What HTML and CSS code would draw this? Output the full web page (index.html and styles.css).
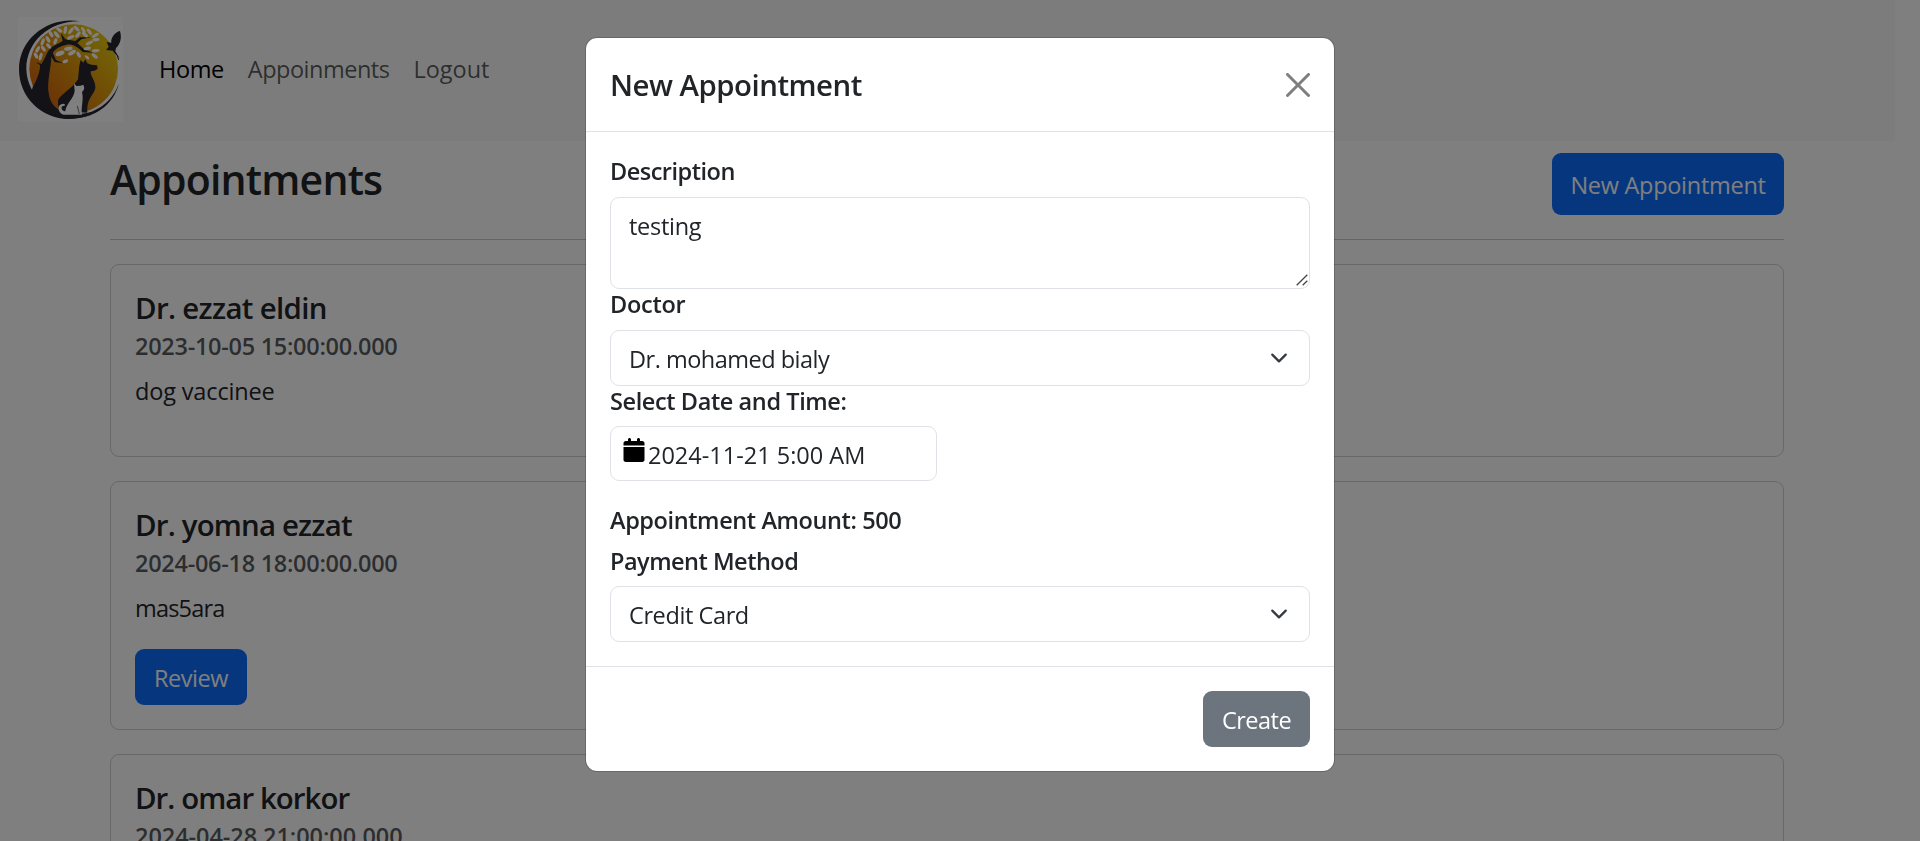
FILE: index.html
```html
<!DOCTYPE html>
<html lang="en">
<head>
<meta charset="utf-8">
<title>Appointments</title>
<link rel="stylesheet" href="styles.css">
</head>
<body>
<nav class="navbar">
  <svg class="logo" viewBox="54 51 315 315" aria-hidden="true">
    <defs>
      <linearGradient id="sun" x1="0.15" y1="0.85" x2="0.85" y2="0.2">
        <stop offset="0" stop-color="#d8660c"/><stop offset="0.5" stop-color="#e0930c"/><stop offset="1" stop-color="#e8c510"/>
      </linearGradient>
    </defs>
    <rect x="54" y="51" width="315" height="315" fill="#fff"/>
    <path fill="#26242f" d="M240 64C150 48 57 112 57 208C57 292 124 357 206 357C280 357 340 318 357 250C338 305 290 338 240 344C150 344 82 290 79 208C78 128 145 62 240 64Z"/>
    <circle cx="221" cy="206" r="133" fill="url(#sun)"/>
    <g fill="#26242f">
      <path d="M98 262C112 240 122 205 120 196L108 186L124 192C136 176 140 156 150 146C162 134 180 130 188 122L182 98L196 118L226 123L240 112L274 112L244 118L232 129L252 148L280 158L248 156C232 140 218 132 200 134C180 138 166 146 158 158L168 180L190 190L164 186L154 170C154 200 140 244 146 280C150 310 166 330 200 338C260 346 290 338 318 312C296 342 250 356 204 356C156 354 110 320 92 284Z"/>
      <path d="M238 196L242 180L250 188L256 178L262 190L274 194L291 196L293 206L284 212L272 214C270 228 286 240 286 262C284 286 260 290 262 338L180 334C174 316 172 308 176 296C192 276 220 262 234 238Z"/>
      <path d="M320 126L334 128C332 112 346 96 360 93C366 112 362 132 348 144L346 154L360 176L338 152L318 150L326 140Z"/>
      <path fill="none" stroke="#26242f" stroke-width="3" d="M342 156Q354 164 356 180"/>
    </g>
    <g fill="#fff">
      <path d="M222 250L229 258L242 257L250 254C254 264 254 268 246 276C252 300 242 324 246 344L190 344C172 338 170 312 190 311C198 312 196 318 188 318C180 324 188 334 196 334C198 310 222 296 224 272Z"/>
      <path stroke="#26242f" stroke-width="2" fill="none" d="M232 318L238 342"/>
      <ellipse cx="113" cy="148" rx="5" ry="11" transform="rotate(30 113 148)"/>
      <ellipse cx="108" cy="167" rx="5" ry="10" transform="rotate(-30 108 167)"/>
      <ellipse cx="122" cy="170" rx="5" ry="12" transform="rotate(15 122 170)"/>
      <ellipse cx="128" cy="126" rx="5" ry="12" transform="rotate(20 128 126)"/>
      <ellipse cx="144" cy="118" rx="5" ry="11" transform="rotate(-30 144 118)"/>
      <ellipse cx="130" cy="146" rx="5" ry="10" transform="rotate(-35 130 146)"/>
      <ellipse cx="146" cy="138" rx="5" ry="10" transform="rotate(-40 146 138)"/>
      <ellipse cx="153" cy="102" rx="5" ry="11" transform="rotate(-30 153 102)"/>
      <ellipse cx="170" cy="104" rx="5" ry="12" transform="rotate(-40 170 104)"/>
      <ellipse cx="166" cy="124" rx="5" ry="10" transform="rotate(20 166 124)"/>
      <ellipse cx="178" cy="90" rx="5" ry="11" transform="rotate(-50 178 90)"/>
      <ellipse cx="196" cy="90" rx="5" ry="12" transform="rotate(10 196 90)"/>
      <ellipse cx="213" cy="92" rx="5" ry="12" transform="rotate(35 213 92)"/>
      <ellipse cx="230" cy="86" rx="5" ry="11" transform="rotate(-45 230 86)"/>
      <ellipse cx="212" cy="112" rx="5" ry="12" transform="rotate(65 212 112)"/>
      <ellipse cx="234" cy="104" rx="5" ry="11" transform="rotate(40 234 104)"/>
      <ellipse cx="250" cy="90" rx="5" ry="10" transform="rotate(-30 250 90)"/>
      <ellipse cx="255" cy="104" rx="5" ry="11" transform="rotate(-50 255 104)"/>
      <ellipse cx="268" cy="95" rx="5" ry="11" transform="rotate(-35 268 95)"/>
      <ellipse cx="286" cy="106" rx="5" ry="12" transform="rotate(60 286 106)"/>
      <ellipse cx="288" cy="119" rx="5" ry="11" transform="rotate(85 288 119)"/>
      <ellipse cx="268" cy="129" rx="5" ry="12" transform="rotate(65 268 129)"/>
      <ellipse cx="262" cy="145" rx="5" ry="11" transform="rotate(80 262 145)"/>
      <ellipse cx="287" cy="152" rx="5" ry="12" transform="rotate(85 287 152)"/>
      <ellipse cx="284" cy="168" rx="5" ry="11" transform="rotate(-50 284 168)"/>
      <ellipse cx="261" cy="172" rx="4" ry="8" transform="rotate(-50 261 172)"/>
      <ellipse cx="205" cy="146" rx="6" ry="13" transform="rotate(80 205 146)"/>
      <ellipse cx="180" cy="160" rx="7" ry="14" transform="rotate(70 180 160)"/>
      <ellipse cx="216" cy="158" rx="6" ry="13" transform="rotate(60 216 158)"/>
      <ellipse cx="236" cy="164" rx="5" ry="10" transform="rotate(-30 236 164)"/>
      <ellipse cx="196" cy="184" rx="5" ry="9" transform="rotate(70 196 184)"/>
    </g>
  </svg>
  <div class="nav-links">
    <a class="nav-link active track-4">Home</a>
    <a class="nav-link track-5">Appoinments</a>
    <a class="nav-link">Logout</a>
  </div>
</nav>
<main class="container">
  <header class="page-head">
    <h3 class="page-title track-8">Appointments</h3>
    <button class="btn btn-primary btn-new track-3">New Appointment</button>
  </header>
  <section class="cards">
    <article class="card">
      <h5 class="card-title track-7">Dr. ezzat eldin</h5>
      <h6 class="card-date track-3">2023-10-05 15:00:00.000</h6>
      <p class="card-text track-2">dog vaccinee</p>
    </article>
    <article class="card">
      <h5 class="card-title track-8">Dr. yomna ezzat</h5>
      <h6 class="card-date track-3">2024-06-18 18:00:00.000</h6>
      <p class="card-text track-8">mas5ara</p>
      <button class="btn btn-primary btn-review track-5">Review</button>
    </article>
    <article class="card">
      <h5 class="card-title track-9">Dr. omar korkor</h5>
      <h6 class="card-date track-1">2024-04-28 21:00:00.000</h6>
    </article>
  </section>
</main>
<div class="backdrop">
  <div class="modal">
    <div class="modal-header">
      <h5 class="modal-title track-5">New Appointment</h5>
      <svg class="close" viewBox="0 0 16 16"><path d="M.293.293a1 1 0 0 1 1.414 0L8 6.586 14.293.293a1 1 0 1 1 1.414 1.414L9.414 8l6.293 6.293a1 1 0 0 1-1.414 1.414L8 9.414l-6.293 6.293a1 1 0 0 1-1.414-1.414L6.586 8 .293 1.707a1 1 0 0 1 0-1.414z"/></svg>
    </div>
    <div class="modal-body">
      <h6 class="label track-5">Description</h6>
      <div class="field area"><span class="track-3">testing</span>
        <svg class="grip" viewBox="0 0 12 12"><path d="M.7 11.3 11.3.7M6.7 11.3l4.6-4.6"/></svg>
      </div>
      <h6 class="label track-3">Doctor</h6>
      <div class="field select"><span class="track-5">Dr. mohamed bialy</span>
        <svg class="chevron" viewBox="0 0 16 16"><path d="m2 5 6 6 6-6"/></svg>
      </div>
      <h6 class="label label-tight track-4">Select Date and Time:</h6>
      <div class="field date">
        <svg class="calendar" viewBox="0 0 448 512"><path d="M96 32V64H48C21.500 64 0 85.500 0 112v48H448V112c0-26.500-21.500-48-48-48H352V32c0-17.700-14.300-32-32-32s-32 14.300-32 32V64H160V32c0-17.700-14.300-32-32-32S96 14.300 96 32zM448 192H0V464c0 26.500 21.500 48 48 48H400c26.500 0 48-21.500 48-48V192z"/></svg>
        <span>2024-11-21 5:00 AM</span>
      </div>
      <h6 class="label track-4">Appointment Amount: 500</h6>
      <h6 class="label label-tight track-5">Payment Method</h6>
      <div class="field select"><span class="track-4">Credit Card</span>
        <svg class="chevron" viewBox="0 0 16 16"><path d="m2 5 6 6 6-6"/></svg>
      </div>
    </div>
    <div class="modal-footer">
      <button class="btn btn-secondary track-5">Create</button>
    </div>
  </div>
</div>
</body>
</html>
```
FILE: styles.css
```css
* { box-sizing: border-box; }
html, body { height: 100%; overflow: hidden; }
body {
  margin: 0;
  padding-right: 25px;
  background: #fff;
  color: #212529;
  font: 400 23.5px/36px "Open Sans", "Noto Sans", sans-serif;
}
h3, h5, h6, p { margin: 0; font-weight: 600; white-space: nowrap; }
p { font-weight: 400; }
span { white-space: nowrap; }

/* letter tracking steps */
.track-1 { letter-spacing: -.06px; }
.track-2 { letter-spacing: -.15px; }
.track-3 { letter-spacing: -.28px; }
.track-4 { letter-spacing: -.4px; }
.track-5 { letter-spacing: -.5px; }
.track-7 { letter-spacing: -.65px; }
.track-8 { letter-spacing: -.8px; }
.track-9 { letter-spacing: -.93px; }

.navbar { display: flex; align-items: center; height: 141px; padding: 0 18px 2px; background: #f8f9fa; }
.logo { width: 105px; height: 105px; flex: none; }
.nav-links { display: flex; gap: 24px; margin-left: 36px; padding-bottom: 2px; }
.nav-link { color: rgba(0, 0, 0, .65); }
.nav-link.active { color: #000; }

.container { padding: 12px 111px 0 110px; }
.page-head { display: flex; justify-content: space-between; align-items: flex-start; height: 87px; border-bottom: 1px solid #c8c9ca; }
.page-title { font-size: 41px; line-height: 53px; }
.btn { height: 56px; padding: 2px 0 0; border: 0; border-radius: 9px; color: #fff; font-family: inherit; font-size: inherit; line-height: 36px; }
.btn-primary { background: #0d6efd; }
.btn-new { height: 62px; width: 232px; }
.btn-review { width: 112px; }
.btn-secondary { width: 107px; background: #6c757d; }

.cards { display: flex; flex-direction: column; gap: 24px; padding-top: 24px; }
.card { height: 193px; padding: 25px 24px 0; border: 1px solid #d0d0d1; border-radius: 9px; }
.card:nth-child(2) { height: 249px; }
.card-title { font-size: 29.4px; line-height: 36px; margin-bottom: 6px; }
.card-date { font-size: 23.5px; line-height: 29px; margin-bottom: 12px; color: rgba(33, 37, 41, .75); }
.card-text { margin-bottom: 23px; }

.backdrop { position: fixed; inset: 0; display: flex; justify-content: center; align-items: flex-start; padding-top: 37px; background: rgba(0, 0, 0, .5); }
.modal { width: 750px; height: 735px; border: 1px solid rgba(0, 0, 0, .175); border-radius: 12px; background: #fff; background-clip: padding-box; }
.modal-header { display: flex; justify-content: space-between; align-items: center; height: 94px; padding: 0 24px; border-bottom: 1px solid #dee2e6; }
.modal-title { padding-top: 2px; font-size: 29.4px; line-height: 45px; }
.close { width: 24px; height: 24px; opacity: .5; }
.modal-body { height: 534px; padding: 24px 24px 0; }
.label { padding-top: 1px; font-size: 23.5px; line-height: 29px; margin-bottom: 11px; }
.label-tight { margin-bottom: 10px; }
.field { display: flex; position: relative; height: 56px; padding: 10px 21px 8px 18px; border: 1px solid #dee2e6; border-radius: 9px; }
.area { height: 92px; }
.grip { position: absolute; right: 1px; bottom: 2px; width: 12px; height: 12px; fill: none; stroke: #444; stroke-width: 1.3; }
.select { justify-content: space-between; }
.chevron { width: 18px; height: 18px; margin-top: 8px; fill: none; stroke: #343a40; stroke-width: 2; stroke-linecap: round; stroke-linejoin: round; }
.date { width: 327px; height: 55px; margin-bottom: 24px; padding-left: 12px; gap: 3px; }
.calendar { width: 22px; height: 24px; margin-top: 1px; }
.modal-footer { display: flex; justify-content: flex-end; padding: 24px; border-top: 1px solid #dee2e6; }
```
